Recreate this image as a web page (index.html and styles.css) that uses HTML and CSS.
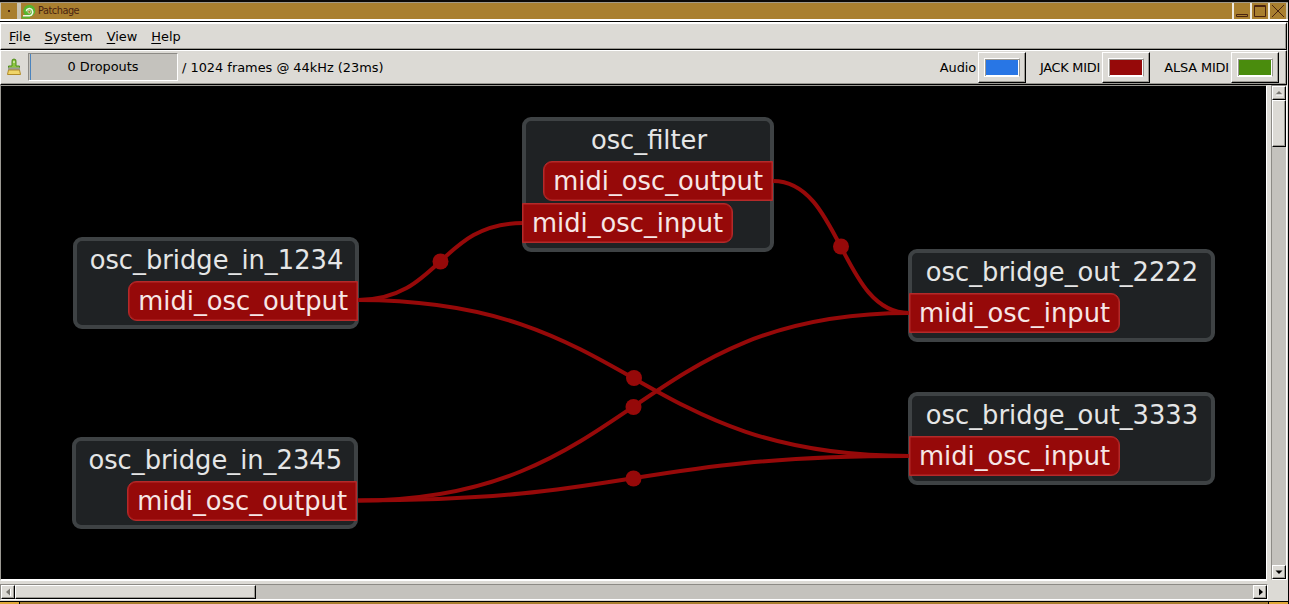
FILE: index.html
```html
<!DOCTYPE html>
<html lang="en">
<head>
<meta charset="utf-8">
<title>Patchage</title>
<link rel="stylesheet" href="styles.css">
</head>
<body>
<div class="window">
  <header class="titlebar">
    <span class="tb-menu"><i></i></span>
    <span class="tb-title">
      <svg class="app-icon" width="14" height="15" viewBox="0 0 14 15">
        <circle cx="7.300" cy="6.800" r="6" fill="#58b52f"/>
        <path d="M0 13.500H8" stroke="#58b52f" stroke-width="2"/>
        <path d="M1 11.800H7.500C10.500 11.500 11.500 8 10 5.800C8.200 3.600 4.500 4.500 4.300 7.200" fill="none" stroke="#eef7e4" stroke-width="1.500"/>
        <circle cx="7.300" cy="7.800" r="1.500" fill="#a97f2f" stroke="#dcefc8" stroke-width=".7"/>
      </svg>
      <span class="tb-text">Patchage</span>
    </span>
    <span class="tb-btn"><svg width="16" height="16" viewBox="0 0 16 16"><path d="M2.500 11.500H13.500V13.500H2.500Z"/></svg></span>
    <span class="tb-btn"><svg width="16" height="16" viewBox="0 0 16 16"><path d="M2.500 2.500H13.500V13.500H2.500ZM2 3.500H14"/></svg></span>
    <span class="tb-btn"><svg width="16" height="16" viewBox="0 0 16 16"><path d="M2 2L14 14M14 2L2 14"/></svg></span>
  </header>

  <nav class="menubar">
    <span><u>F</u>ile</span><span><u>S</u>ystem</span><span><u>V</u>iew</span><span><u>H</u>elp</span>
  </nav>

  <div class="toolbar">
    <svg class="brush" width="14" height="18" viewBox="0 0 14 18">
      <path d="M5 8V4Q4.500 1 7 1T9 4V8H12.500V11H1.500V8Z" fill="#8cc63f" stroke="#4e8a1c"/>
      <path d="M7 3V5" stroke="#eaf5d5" stroke-width="1.200"/>
      <path d="M1 9.500H13V12H1Z" fill="#9a9c94"/>
      <path d="M1.500 12H12.500L13.500 16.500H.5Z" fill="#f0d568" stroke="#b08a28"/>
    </svg>
    <div class="dropouts">0 Dropouts</div>
    <div class="frames">/ 1024 frames @ 44kHz (23ms)</div>
    <div class="legend audio"><span>Audio</span><b class="swatch"><i></i></b></div>
    <div class="legend jack"><span>JACK MIDI</span><b class="swatch"><i></i></b></div>
    <div class="legend alsa"><span>ALSA MIDI</span><b class="swatch"><i></i></b></div>
  </div>

  <div class="work">
    <main class="canvas">
      <section class="node in-a">
        <h2>osc_bridge_in_1234</h2><div class="port out">midi_osc_output</div>
      </section>
      <section class="node in-b">
        <h2>osc_bridge_in_2345</h2><div class="port out">midi_osc_output</div>
      </section>
      <section class="node filter">
        <h2>osc_filter</h2><div class="port out">midi_osc_output</div><div class="port in">midi_osc_input</div>
      </section>
      <section class="node out-a">
        <h2>osc_bridge_out_2222</h2><div class="port in">midi_osc_input</div>
      </section>
      <section class="node out-b">
        <h2>osc_bridge_out_3333</h2><div class="port in">midi_osc_input</div>
      </section>
      <svg class="wires" width="1265" height="493" viewBox="1 86 1265 493">
        <path d="M358 300C440 300 440 223 523 223"/>
        <path d="M773 181C841 181 841 313 909 313"/>
        <path d="M358 300C633 300 633 456 909 456"/>
        <path d="M358 500.500C633 500.500 633 313 909 313"/>
        <path d="M358 500.500C633 500.500 633 456 909 456"/>
        <circle cx="440.500" cy="261.500" r="8"/>
        <circle cx="841" cy="246.500" r="8"/>
        <circle cx="634" cy="378" r="8"/>
        <circle cx="633.500" cy="407" r="8"/>
        <circle cx="633.500" cy="478.500" r="8"/>
      </svg>
    </main>
    <div class="vscroll">
      <span class="arrow"><svg width="12" height="12" viewBox="0 0 12 12"><path d="M2.500 7.500L6 4L9.500 7.500Z" fill="#77756f"/><path d="M3 8H10" stroke="#fff"/></svg></span>
      <span class="thumb"></span>
      <span class="arrow"><svg width="12" height="12" viewBox="0 0 12 12"><path d="M2.500 4.500H9.500L6 8Z" fill="#000"/></svg></span>
    </div>
  </div>

  <div class="hscroll">
    <span class="arrow"><svg width="12" height="12" viewBox="0 0 12 12"><path d="M8 2.500V9.500L4 6Z" fill="#77756f"/><path d="M8.500 3V10" stroke="#fff"/></svg></span>
    <span class="thumb"></span>
    <span class="arrow"><svg width="12" height="12" viewBox="0 0 12 12"><path d="M5 2.500V9.500L9 6Z" fill="#000"/></svg></span>
  </div>
  <footer class="frame-bottom"><i></i><i></i><i></i></footer>
</div>
</body>
</html>
```
FILE: styles.css
```css
* { box-sizing: border-box; }
body { margin: 0; background: #000; overflow: hidden; }
svg { display: block; }
.window {
  width: 1289px; height: 604px; display: flex; flex-direction: column;
  background: #dcdad5; color: #000; font: 12.9px "DejaVu Sans", sans-serif;
  border-right: 1px solid #000;
}

/* title bar */
.titlebar {
  height: 22px; display: flex; gap: 4px; padding: 1px 2px 0 1px; flex: none;
  border-top: 2px solid #0b0908; border-bottom: 1px solid #000;
  background: linear-gradient(#a39b89 0 1px, #c9c4b4 1px 17px, #fff 17px);
}
.titlebar > span { height: 16px; background: #a97f2f; flex: none; }
.tb-menu { width: 16px; display: grid; place-items: center; }
.tb-menu i { width: 2px; height: 2px; background: #4a2410; }
.titlebar .tb-title { flex: 1; display: flex; align-items: center; padding-left: 1px; color: #4a2410; }
.tb-text { font: 10.8px/14px "DejaVu Sans Condensed", "DejaVu Sans", sans-serif; letter-spacing: -.45px; margin-left: 2px; }
.titlebar .tb-btn { width: 16px; margin-left: -2px; box-shadow: -2px 0 #eeeae0; }
.tb-btn path { fill: none; stroke: #4a2410; }

/* menu */
.menubar {
  height: 28px; width: 1287px; flex: none; display: flex; gap: 14px; padding: 6px 0 0 8px;
  border: solid; border-width: 2px 1px 1px;
  border-color: #fff #000 #000 #fff;
  box-shadow: inset -1px -1px #9b9993;
}
.menubar span { line-height: 14px; }
.menubar u { text-decoration-thickness: 1px; text-underline-offset: 2px; }

/* toolbar */
.toolbar {
  height: 35px; flex: none; width: 1287px; display: flex; align-items: center;
  border: 1px solid; border-color: #fff #000 #000 #fff;
  box-shadow: inset -1px -1px #9b9993; padding: 0 7px 2px 6px;
}
.brush { margin-right: 7px; }
.dropouts {
  width: 150px; height: 28px; line-height: 25px; text-align: center; background: #c4c2bd;
  border: 1px solid; border-color: #8d8b86 #fff #fff #8d8b86;
  box-shadow: inset 1px 0 #c4c2bd, inset 2px 0 #4b83bd;
}
.frames { margin-left: 4px; flex: 1; padding-top: 2px; }
.legend { display: flex; align-items: center; justify-content: flex-end; padding-top: 1px; }
.legend span { margin-right: 2px; letter-spacing: -.1px; }
.jack { width: 124px; }
.alsa { width: 129px; }
.jack span { letter-spacing: -.25px; }
.alsa span { letter-spacing: -.15px; }
.swatch {
  width: 48px; height: 31px; padding: 5px; border: 1px solid; border-color: #fff #000 #000 #fff;
  box-shadow: inset -1px -1px #9b9993;
}
.swatch i {
  display: block; height: 19px; width: 36px; border: 1px solid #fff;
  border-right-color: #9b9993; box-shadow: inset 1px 1px #9b9993, inset -1px -1px #fff;
  background: content-box; padding: 1px;
}
.audio i { background-color: #2876e5; }
.jack i { background-color: #960909; }
.alsa i { background-color: #4a8c0d; }

/* canvas area */
.work { height: 496px; flex: none; display: flex; gap: 4px; }
.canvas {
  width: 1267px; height: 496px; background: #000; position: relative;
  border: 1px solid; border-color: #9b9993 #fff #fff #9b9993;
  border-bottom-width: 2px;
}
.wires { position: absolute; left: 0; top: 0; fill: #960909; }
.wires path { fill: none; stroke: #960909; stroke-width: 4; }
.node {
  position: absolute; background: #1f2224; border: 4px solid #3e4244; border-radius: 9px;
  display: flex; flex-direction: column; align-items: flex-start; gap: 2px;
  color: #e5e6e6; font-size: 25.75px; line-height: 30px; white-space: nowrap;
}
.node h2 { font: inherit; margin: 4px 0 0 1px; align-self: center; height: 34px; }
.port {
  height: 40px; background: #960909; border: 1.5px solid #b42a2a; color: #f6e6e6;
  padding: 4px 9px; z-index: 1; box-shadow: inset 0 0 0 .5px #b42a2a;
}
.out { align-self: flex-end; border-radius: 9px 0 0 9px; margin-right: -3px; }
.in { border-radius: 0 9px 9px 0; margin-left: -3px; }
.in-a { left: 72px; top: 151px; width: 286px; height: 92px; }
.in-b { left: 70.5px; top: 351px; width: 286.500px; height: 92px; }
.filter { left: 521px; top: 31px; width: 252px; height: 135px; }
.filter .in { margin-left: -4px; }
.filter h2 { margin-left: 2px; }
.in-a .port, .in-b .port { margin-top: -.5px; }
.out-a { left: 907px; top: 163px; width: 307px; height: 93px; }
.out-b { left: 907px; top: 306px; width: 307px; height: 93px; }

/* scrollbars */
.arrow, .thumb {
  flex: none; background: #dcdad5; border: 1px solid; border-color: #fff #000 #000 #fff;
  box-shadow: inset -1px -1px #9b9993;
}
.vscroll {
  width: 16px; height: 495px; display: flex; flex-direction: column; background: #c4c2bd;
  border: 1px solid; border-color: #8d8b86 #fff #fff #8d8b86;
}
.vscroll .arrow { height: 14px; }
.vscroll .thumb { height: 47px; }
.vscroll .arrow:last-child { margin-top: auto; }
.hscroll .arrow:last-child { margin-left: auto; }
.hscroll {
  width: 1268px; height: 16px; margin-top: 3px; flex: none; display: flex; background: #c4c2bd;
  border: 1px solid; border-color: #8d8b86 #fff #fff #8d8b86;
}
.hscroll .arrow { width: 14px; }
.hscroll .thumb { width: 241px; }
.frame-bottom {
  display: flex; height: 3px; margin-top: auto; border-top: 1px solid #000; flex: none; gap: 1px; background: #000;
}
.frame-bottom i { background: #e0a838; width: 19px; }
.frame-bottom i:nth-child(2) { flex: 1; background: #a97f2f; }
```
